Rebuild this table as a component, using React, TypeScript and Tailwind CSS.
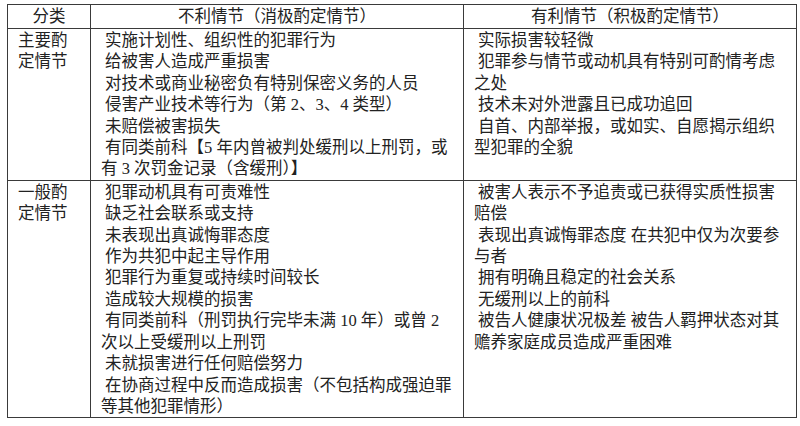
import React from 'react';

type Row = {
  label: string;
  bad: string[][];
  good: string[][];
};

const rows: Row[] = [
  {
    label: '主要酌定情节',
    bad: [
      ['实施计划性、组织性的犯罪行为'],
      ['给被害人造成严重损害'],
      ['对技术或商业秘密负有特别保密义务的人员'],
      ['侵害产业技术等行为（第 2、3、4 类型）'],
      ['未赔偿被害损失'],
      ['有同类前科【5 年内曾被判处缓刑以上刑罚，或', '有 3 次罚金记录（含缓刑）】'],
    ],
    good: [
      ['实际损害较轻微'],
      ['犯罪参与情节或动机具有特别可酌情考虑', '之处'],
      ['技术未对外泄露且已成功追回'],
      ['自首、内部举报，或如实、自愿揭示组织', '型犯罪的全貌'],
    ],
  },
  {
    label: '一般酌定情节',
    bad: [
      ['犯罪动机具有可责难性'],
      ['缺乏社会联系或支持'],
      ['未表现出真诚悔罪态度'],
      ['作为共犯中起主导作用'],
      ['犯罪行为重复或持续时间较长'],
      ['造成较大规模的损害'],
      ['有同类前科（刑罚执行完毕未满 10 年）或曾 2', '次以上受缓刑以上刑罚'],
      ['未就损害进行任何赔偿努力'],
      ['在协商过程中反而造成损害（不包括构成强迫罪', '等其他犯罪情形）'],
    ],
    good: [
      ['被害人表示不予追责或已获得实质性损害', '赔偿'],
      ['表现出真诚悔罪态度 在共犯中仅为次要参', '与者'],
      ['拥有明确且稳定的社会关系'],
      ['无缓刑以上的前科'],
      ['被告人健康状况极差 被告人羁押状态对其', '赡养家庭成员造成严重困难'],
    ],
  },
];

const Items: React.FC<{ items: string[][] }> = ({ items }) => (
  <div>
    {items.map((lines, i) =>
      lines.map((line, j) => (
        <div key={`${i}-${j}`} className={`whitespace-nowrap ${j === 0 ? 'pl-[4px]' : ''}`}>
          {line}
        </div>
      ))
    )}
  </div>
);

const App: React.FC = () => {
  return (
    <div
      className="w-[800px] h-[426px] bg-white pt-[4px] pl-[7px] text-[#222] text-[16.5px] leading-[21.4px]"
      style={{ fontFamily: '"Liberation Serif", "Noto Sans CJK SC", serif' }}
    >
      <table className="border-collapse table-fixed w-[789px]">
        <colgroup>
          <col className="w-[83px]" />
          <col className="w-[373px]" />
          <col className="w-[333px]" />
        </colgroup>
        <thead>
          <tr className="h-[24px]">
            <th className="border border-[#3a3a3a] font-normal text-center p-0">分类</th>
            <th className="border border-[#3a3a3a] font-normal text-center p-0">不利情节（消极酌定情节）</th>
            <th className="border border-[#3a3a3a] font-normal text-center p-0">有利情节（积极酌定情节）</th>
          </tr>
        </thead>
        <tbody>
          {rows.map((row, idx) => (
            <tr key={row.label} className={idx === 0 ? 'h-[150px]' : 'h-[237px]'}>
              <td className="border border-[#3a3a3a] align-top pt-[1px] px-[10px]">{row.label}</td>
              <td className="border border-[#3a3a3a] align-top pt-[1px] px-[10px]">
                <Items items={row.bad} />
              </td>
              <td className="border border-[#3a3a3a] align-top pt-[1px] px-[10px]">
                <Items items={row.good} />
              </td>
            </tr>
          ))}
        </tbody>
      </table>
    </div>
  );
};

export default App;
